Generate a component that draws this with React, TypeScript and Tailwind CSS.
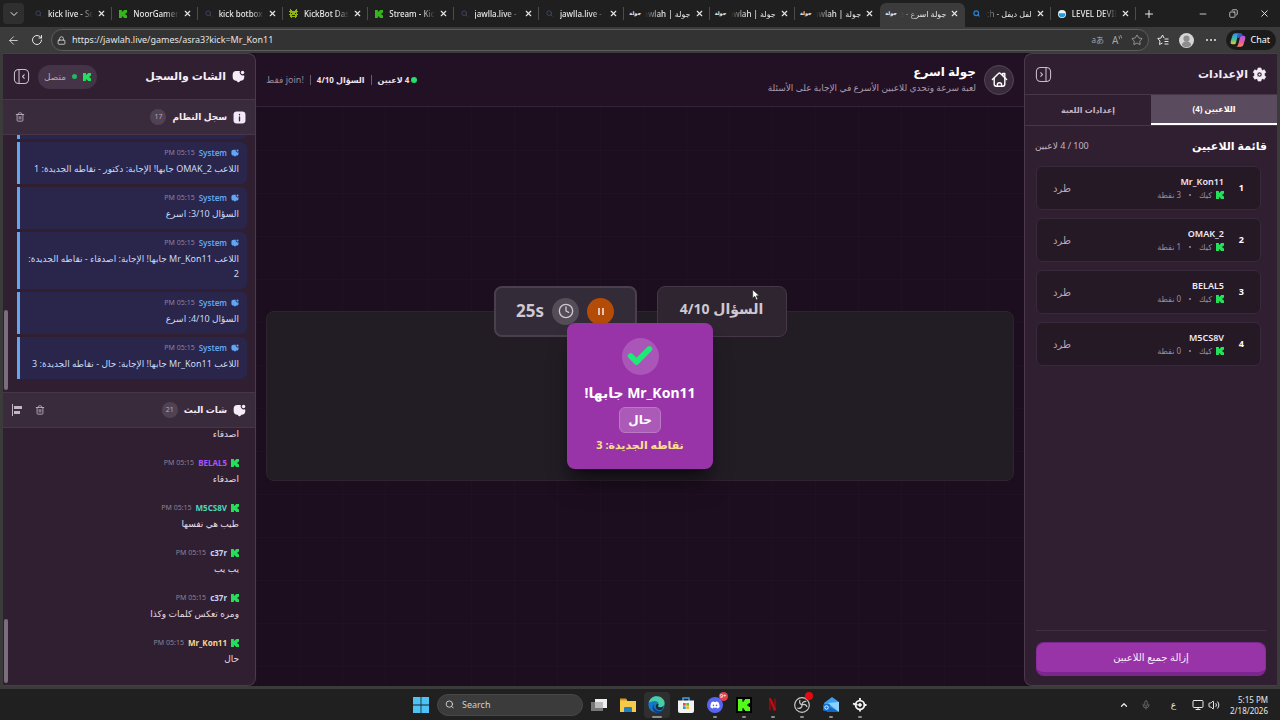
import type { ReactNode } from "react";
import { ArrowLeft, Check, ChevronDown, ChevronUp, Clock, Copy, Lock, Mic, Minus, Monitor, Plus, RotateCw, Search, Star, Trash2, Volume2, X } from "lucide-react";
import { FaDiscord } from "react-icons/fa";

interface Tab {
    icon: "search" | "kick" | "bot" | "jawlah" | "bing" | "level";
    title: string;
    rtl?: boolean;
    active?: boolean;
}

interface LogItem {
    text: string;
}

interface ChatItem {
    user: string;
    color: string;
    text: string;
}

interface Player {
    name: string;
    points: number;
}

const TIME = "05:15 PM";

const tabs: Tab[] = [
    { icon: "search", title: "kick live - Sea" },
    { icon: "kick", title: "NoorGamer S" },
    { icon: "search", title: "kick botbox -" },
    { icon: "bot", title: "KickBot Dash" },
    { icon: "kick", title: "Stream - Kick" },
    { icon: "search", title: "jawlla.live - Se" },
    { icon: "search", title: "jawlla.live - Se" },
    { icon: "jawlah", title: "جولة | Jawlah", rtl: true },
    { icon: "jawlah", title: "جولة | Jawlah", rtl: true },
    { icon: "jawlah", title: "جولة | Jawlah", rtl: true },
    { icon: "jawlah", title: "جولة اسرع - e", rtl: true, active: true },
    { icon: "bing", title: "لفل ديفل - ch", rtl: true },
    { icon: "level", title: "LEVEL DEVIL" },
];

const logs: LogItem[] = [
    { text: "السؤال 2/10: اسرع" },
    { text: "اللاعب OMAK_2 جابها! الإجابة: دكتور - نقاطه الجديدة: 1" },
    { text: "السؤال 3/10: اسرع" },
    { text: "اللاعب Mr_Kon11 جابها! الإجابة: اصدقاء - نقاطه الجديدة: 2" },
    { text: "السؤال 4/10: اسرع" },
    { text: "اللاعب Mr_Kon11 جابها! الإجابة: حال - نقاطه الجديدة: 3" },
];

const chat: ChatItem[] = [
    { user: "OMAK_2", color: "text-[#e9d5ff]", text: "اصدقاء" },
    { user: "BELAL5", color: "text-[#a855f7]", text: "اصدقاء" },
    { user: "M5CS8V", color: "text-[#4fd6bd]", text: "طيب هي نفسها" },
    { user: "c37r", color: "text-[#c9d6f5]", text: "يب يب" },
    { user: "c37r", color: "text-[#c9d6f5]", text: "ومره تعكس كلمات وكذا" },
    { user: "Mr_Kon11", color: "text-[#fbd78e]", text: "حال" },
];

const players: Player[] = [
    { name: "Mr_Kon11", points: 3 },
    { name: "OMAK_2", points: 1 },
    { name: "BELAL5", points: 0 },
    { name: "M5CS8V", points: 0 },
];

const KickIcon = ({ className }: { className: string }) => (
    <svg viewBox="0 0 9 9" fill="currentColor" className={className}>
        <path d="M0 0h3.3v2h1V1h1V0H9v3H8v1H7v1h1v1h1v3H5.3V8h-1V7h-1v2H0z" />
    </svg>
);

const ChatIcon = ({ className }: { className: string }) => (
    <svg viewBox="0 0 24 24" fill="currentColor" className={className}>
        <path d="M14.500 2a5.800 5.800 0 0 0 7.800 7.500c.3 1 .4 2 .4 3 0 4.300-1.700 6.700-5.700 7.300h-1.500L13.500 22c-.8.900-2.200.900-3 0L8.300 19.800H7C3 19.200 1.200 16.800 1.200 12.500V9c0-4.500 2.300-7 6.800-7z" />
        <circle cx="19.500" cy="4.800" r="3.200" />
    </svg>
);

const GearIcon = () => (
    <svg viewBox="0 0 24 24" fill="currentColor" fillRule="evenodd" className="size-[15px]">
        <path d="M9.700 1.500h4.600l.8 3 1.600.9 3-.9 2.300 4-2.200 2.200v2.600l2.200 2.200-2.300 4-3-.9-1.600.9-.8 3H9.700l-.8-3-1.600-.9-3 .9-2.300-4 2.200-2.200v-2.600L2 8.500l2.300-4 3 .9 1.600-.9zM12 8a4 4 0 1 0 0 8 4 4 0 0 0 0-8z" stroke="currentColor" strokeLinejoin="round" />
        <circle cx="12" cy="12" r="1.800" />
    </svg>
);

const HomeIcon = () => (
    <svg viewBox="0 0 24 24" fill="none" stroke="currentColor" strokeWidth="2" strokeLinecap="round" strokeLinejoin="round" className="size-[17px]">
        <path d="M2 12 10.600 3.600a2 2 0 0 1 2.800 0L22 12" />
        <path d="M4.500 10v8.500A3 3 0 0 0 7.500 21.500h9a3 3 0 0 0 3-3V10" />
        <path d="M9 21.500V19.500a3 3 0 0 1 6 0v2M16.500 6.500V3.500h3V9" />
    </svg>
);

const SidebarIcon = ({ flip }: { flip?: boolean }) => (
    <svg viewBox="0 0 24 24" fill="none" stroke="currentColor" strokeWidth="1.500" strokeLinecap="round" strokeLinejoin="round" className="size-[17px]">
        <rect x="2" y="2" width="20" height="20" rx="6" />
        {flip
            ? <path d="M15.500 2v20M8 9.500l2.500 2.500L8 14.500" />
            : <path d="M8.500 2v20M16 9.500 13.500 12l2.500 2.500" />}
    </svg>
);

const InfoIcon = () => (
    <svg viewBox="0 0 24 24" className="size-[13px]">
        <rect x="1" y="1" width="22" height="22" rx="6" fill="#f3e8f7" />
        <path d="M12 11v7M12 6.500v.5" stroke="#3a2a3c" strokeWidth="2.500" strokeLinecap="round" />
    </svg>
);

const CopilotIcon = () => (
    <svg viewBox="0 0 24 24" className="size-4">
        <defs>
            <linearGradient id="cpA" x1="0" y1="0" x2="0" y2="1">
                <stop offset="0" stopColor="#2f8df0" />
                <stop offset="0.600" stopColor="#4cc38a" />
                <stop offset="1" stopColor="#f4c430" />
            </linearGradient>
            <linearGradient id="cpB" x1="0" y1="0" x2="0" y2="1">
                <stop offset="0" stopColor="#a05cf0" />
                <stop offset="0.600" stopColor="#ee5a9a" />
                <stop offset="1" stopColor="#f98a5b" />
            </linearGradient>
        </defs>
        <path d="M8 2h7c-2 0-3 2-3.500 4L9 16c-.5 1.800-1.500 2.500-3 2.500H4c-3 0-3.500-2-2.800-5L3.500 6C4.300 3.300 5.500 2 8 2z" fill="url(#cpA)" />
        <path d="M12 2h4c2 0 2.500 1.500 3 3.500h-1.500c-2 0-3 1.500-3.500 3.500h-3z" fill="#2a5fd8" />
        <path d="M16 22H9c2 0 3-2 3.500-4L15 8c.5-1.800 1.500-2.500 3-2.500h2c3 0 3.500 2 2.800 5L20.500 18c-.8 2.700-2 4-4.500 4z" fill="url(#cpB)" />
    </svg>
);

const TabIcon = ({ icon }: { icon: Tab["icon"] }) => {
    if (icon === "kick") return <KickIcon className="size-2 text-[#35b51c]" />;
    if (icon === "search") return <Search className="size-[7px] text-[#3d4a68]" strokeWidth={3} />;
    if (icon === "bing") return <Search className="size-[7px] text-[#2584d8]" strokeWidth={4} />;
    if (icon === "jawlah") return <span className="text-[5px] leading-none font-bold text-[#eeeeee]">جولة</span>;
    if (icon === "bot") {
        return <svg viewBox="0 0 9 9" fill="#8fb312" className="size-[9px]">
            <path fillRule="evenodd" d="M1 0h1v1h1v1h3V1h1V0h1v2h1v1H8v2h1v1H8v2H7v1H6V8H3v1H2V8H1V6H0V5h1V3H0V2h1zM2 4v1h1V4zM6 4v1h1V4zM3 6v1h3V6z" />
        </svg>;
    }
    return <svg viewBox="0 0 10 10" className="size-2">
        <circle cx="5" cy="5" r="5" fill="#e8f6ff" />
        <path d="M1 4h8v2a4 3 0 0 1-8 0z" fill="#2498dc" />
    </svg>;
};

const BrowserBar = () => (
    <header className="shrink-0 text-[#e8e8e8]">
        <div className="flex h-[27px] items-end bg-[#1f1f1f]">
            <button aria-label="Tab list" className="mx-[3px] mb-[3px] flex size-[21px] items-center justify-center rounded bg-[#2f2f2f]">
                <ChevronDown className="size-3" />
            </button>
            <nav className="flex h-6 min-w-0 flex-1">
                {tabs.map((tab, i) => (
                    <a
                        key={i}
                        href="#"
                        className={`flex min-w-0 flex-1 items-center gap-1 pr-1.5 pl-[5px] pb-[3px] ${tab.active ? "rounded-t-md bg-[#3b3b3b]" : tabs[i + 1]?.active ? "" : "bg-[linear-gradient(#4c4c4c,#4c4c4c)] bg-[length:1px_13px] bg-[position:right_4px] bg-no-repeat"}`}
                    >
                        <span className="flex w-3 shrink-0 justify-center"><TabIcon icon={tab.icon} /></span>
                        <span
                            dir={tab.rtl ? "rtl" : "ltr"}
                            className={`min-w-0 flex-1 text-[8px] leading-4 font-medium whitespace-nowrap ${tab.rtl ? "[mask-image:linear-gradient(to_left,#000_65%,transparent)]" : "[mask-image:linear-gradient(to_right,#000_70%,transparent)]"}`}
                        >
                            {tab.title}
                        </span>
                        <X className="size-[9px] shrink-0" strokeWidth={3} />
                    </a>
                ))}
            </nav>
            <div className="flex h-[27px] w-36 items-center pl-[7px]">
                <button aria-label="New tab" className="mr-auto"><Plus className="size-3" /></button>
                <div className="flex items-center gap-[21px] pr-2.5">
                    <button aria-label="Minimize"><Minus className="size-[10px]" /></button>
                    <button aria-label="Restore"><Copy className="size-[9px] -scale-x-100" /></button>
                    <button aria-label="Close"><X className="size-[11px]" /></button>
                </div>
            </div>
        </div>
        <div className="flex h-[26px] items-center bg-[#3b3b3b] pr-1 pl-[7px]">
            <button aria-label="Back"><ArrowLeft className="size-[13px]" strokeWidth={1.5} /></button>
            <button aria-label="Reload" className="mr-2 ml-[11px]"><RotateCw className="size-3" strokeWidth={2} /></button>
            <div className="flex h-[22px] min-w-0 flex-1 items-center gap-2 rounded-full border border-[#5c5c5c] bg-[#333333] px-[5px]">
                <Lock className="size-[9px]" />
                <input aria-label="Address" defaultValue="https://jawlah.live/games/asra3?kick=Mr_Kon11" className="-ml-0.5 min-w-0 flex-1 bg-transparent text-[9px] text-[#e4e4e4] outline-none" />
                <span className="text-[8px] text-[#a5a5a5]">aあ</span>
                <span className="flex items-start text-[10px] leading-none text-[#a5a5a5]">A
                    <svg viewBox="0 0 6 6" fill="none" stroke="currentColor" className="size-[5px]"><path d="m1 1 1 4M3 0l1.500 4" /></svg>
                </span>
                <Star className="size-3 text-[#b5b5b5]" strokeWidth={1.5} />
            </div>
            <button aria-label="Favorites" className="ml-2 flex items-center">
                <svg viewBox="0 0 24 24" fill="none" stroke="currentColor" strokeWidth="2" strokeLinejoin="round" className="size-3">
                    <path d="m14 8-3-6-3 6-6.500 1L6 14l-1 7 6-3M15 10h8M15 15h8M15 20h8" />
                </svg>
            </button>
            <button aria-label="Profile" className="ml-2.5">
                <svg viewBox="0 0 16 16" className="size-[15px]">
                    <circle cx="8" cy="8" r="8" fill="#d5d5d5" />
                    <circle cx="8" cy="6" r="3.300" fill="#8d8d8d" />
                    <path d="M3 13a5 4 0 0 1 10 0 7 7 0 0 1-10 0z" fill="#8d8d8d" />
                </svg>
            </button>
            <button aria-label="More" className="ml-3">
                <svg viewBox="0 0 10 4" fill="currentColor" className="h-1 w-2.5"><circle cx="1" cy="2" r="1" /><circle cx="5" cy="2" r="1" /><circle cx="9" cy="2" r="1" /></svg>
            </button>
            <button className="ml-2.5 flex h-5 items-center gap-1 rounded-full bg-[#1b1b1b] pr-1.5 pl-1 text-[9px] text-white">
                <CopilotIcon /> Chat
            </button>
        </div>
    </header>
);

const Count = ({ children }: { children: ReactNode }) => (
    <span className="flex h-4 min-w-4 items-center justify-center rounded-full bg-[#504153] px-1 text-[7px] font-normal text-[#b7a9ba]">{children}</span>
);

const SettingsPanel = () => (
    <aside className="flex w-[253px] shrink-0 flex-col rounded-r-none rounded-l-lg border-r-0 border border-[#4a3a4c] bg-[#2f1f31]">
        <div className="flex h-10 items-center justify-between px-[10px] text-[#f5ecf7]">
            <h2 className="flex items-center gap-1 text-[11px] font-bold"><GearIcon />الإعدادات</h2>
            <button aria-label="طي الإعدادات" className="text-[#c9bccb]"><SidebarIcon flip /></button>
        </div>
        <div className="flex h-8 border-y border-t-[#463648] border-b-[#463648] text-[8px] font-bold">
            <button className="flex-1 border-b-2 border-white bg-[#5b4b5e] text-white">اللاعبين (4)</button>
            <button className="flex-1 text-[#c3b4c6]">إعدادات اللعبة</button>
        </div>
        <div className="flex h-10 items-center justify-between px-[10px]">
            <h3 className="text-[11px] font-bold text-white">قائمة اللاعبين</h3>
            <span className="text-[9px] text-[#c3b4c6]">100 / 4 لاعبين</span>
        </div>
        <ul className="flex min-h-0 flex-1 flex-col gap-2 pr-4 pl-[11px]">
            {players.map((player, i) => (
                <li key={player.name} className="flex h-11 items-center rounded-md border border-[#382a3b] bg-[#251926] px-4">
                    <span className="w-[20px] text-[9px] font-bold text-white">{i + 1}</span>
                    <div className="flex-1">
                        <p className="text-[9px] leading-[13px] font-semibold text-[#f2e9f4]">{player.name}</p>
                        <p className="flex items-center gap-1 text-[8px] leading-[13px] text-[#9c8e9f]">
                            <KickIcon className="size-2 text-[#22e05a]" />كيك<span className="mx-1 size-0.5 rounded-full bg-[#9c8e9f]" />{player.points} نقطة
                        </p>
                    </div>
                    <button className="text-[10px] text-[#b5a6b8]">طرد</button>
                </li>
            ))}
        </ul>
        <div className="mx-[11px] border-t border-[#3f3042] pt-[11px] pb-[9px]">
            <button className="h-[34px] w-full rounded-lg border border-b-4 border-[#7d2690] border-x-[#8a2c9b] bg-[#9833a8] text-[10px] text-[#fbeefd]">إزالة جميع اللاعبين</button>
        </div>
    </aside>
);

const SystemLog = () => (
    <section>
        <div className="flex h-9 items-center justify-between border-y border-[#463648] bg-[#3a2b3c] pr-[9px] pl-3">
            <h3 className="flex items-center gap-1.5 text-[9px] font-bold text-[#f5ecf7]"><InfoIcon />سجل النظام<Count>17</Count></h3>
            <button aria-label="مسح السجل"><Trash2 className="size-[10px] text-[#c3b4c6]" /></button>
        </div>
        <div className="relative flex h-[257px] flex-col justify-end gap-[3px] overflow-hidden pr-2 pb-[13px] pl-[14px]">
            {logs.map((log, i) => (
                <div key={i} className="shrink-0 rounded-r-md border-l-[3px] border-[#62a5f3] bg-[#29254b] pt-[3px] pr-2 pb-2 pl-2">
                    <p className="flex items-center gap-1 text-[8px] leading-4">
                        <ChatIcon className="size-2 text-[#62a5f3]" />
                        <span className="font-semibold text-[#62a5f3]">System</span>
                        <span className="text-[7px] text-[#8b83a3]">{TIME}</span>
                    </p>
                    <p className="text-[9px] leading-[15px] text-[#c7dbf8]">{log.text}</p>
                </div>
            ))}
            <span className="absolute bottom-0.5 left-px h-20 w-1 rounded-full bg-[#7b6c7e]" />
        </div>
    </section>
);

const StreamChat = () => (
    <section className="flex min-h-0 flex-1 flex-col">
        <div className="flex h-9 shrink-0 items-center justify-between border-y border-[#463648] bg-[#3a2b3c] pr-[9px] pl-2">
            <h3 className="flex items-center gap-1.5 text-[9px] font-bold text-[#f5ecf7]"><ChatIcon className="size-[13px]" />شات البث<Count>21</Count></h3>
            <div className="flex items-center gap-3 text-[#c3b4c6]">
                <button aria-label="مسح الشات"><Trash2 className="size-[10px]" /></button>
                <button aria-label="محاذاة">
                    <svg viewBox="0 0 12 12" fill="currentColor" className="size-3">
                        <path d="M1 0h1v12H1zM3 2h8v3H3zM3 7h6v3H3z" />
                    </svg>
                </button>
            </div>
        </div>
        <div className="relative flex min-h-0 flex-1 flex-col justify-end gap-[3px] overflow-hidden pr-4 pb-[11px]">
            {chat.map((item, i) => (
                <div key={i} className="shrink-0 pt-[3px] pb-2">
                    <p className="flex items-center gap-1 text-[8px] leading-4">
                        <KickIcon className="size-2 text-[#22e05a]" />
                        <span className={`font-bold ${item.color}`}>{item.user}</span>
                        <span className="text-[7px] text-[#8f8192]">{TIME}</span>
                    </p>
                    <p className="text-[9px] leading-[15px] text-[#e6dce8]">{item.text}</p>
                </div>
            ))}
            <span className="absolute bottom-0.5 left-px h-16 w-1 rounded-full bg-[#7b6c7e]" />
        </div>
    </section>
);

const ChatPanel = () => (
    <aside className="flex w-[253px] shrink-0 flex-col overflow-hidden rounded-r-lg border border-l-0 border-[#4a3a4c] bg-[#2f1f31]">
        <div className="flex h-[45px] shrink-0 items-center justify-between px-[10px]">
            <h2 className="flex items-center gap-1.5 text-[11px] font-bold text-[#f5ecf7]"><ChatIcon className="size-[13px]" />الشات والسجل</h2>
            <div className="flex items-center gap-2">
                <span className="flex h-6 items-center gap-1.5 rounded-full bg-[#453448] px-1.5 text-[9px] text-[#b5a6b8]">
                    <KickIcon className="size-2 text-[#22e05a]" />
                    <span className="size-[5px] rounded-full bg-[#27b564]" />متصل
                </span>
                <button aria-label="طي الشات" className="text-[#c9bccb]"><SidebarIcon /></button>
            </div>
        </div>
        <SystemLog />
        <StreamChat />
    </aside>
);

const Cursor = () => (
    <svg viewBox="0 0 12 18" className="absolute top-0.5 left-[94px] h-3 w-2">
        <path d="M1 1v13l3.200-3 2.300 5.500 2.300-1-2.300-5.200H11z" fill="white" stroke="#222" />
    </svg>
);

const Game = () => (
    <main className="flex min-w-0 flex-1 flex-col bg-[#1d0e1f]">
        <div className="flex h-[54px] items-center justify-between border-b border-[#33233a] bg-[#221124] px-[10px]">
            <div className="flex items-center gap-2">
                <a href="#" aria-label="الرئيسية" className="flex size-[30px] items-center justify-center rounded-full border border-[#554658] bg-[#392a3c] text-white"><HomeIcon /></a>
                <div>
                    <h1 className="text-[12px] leading-4 font-bold text-white">جولة اسرع</h1>
                    <p className="text-[9px] leading-4 text-[#a999ad]">لعبة سرعة وتحدي للاعبين الأسرع في الإجابة على الأسئلة</p>
                </div>
            </div>
            <div className="flex items-center gap-1.5 text-[8px] font-bold text-[#ede3ef]">
                <span className="flex items-center gap-0.5"><span className="size-1.5 rounded-full bg-[#22e06a]" />4 لاعبين</span>
                <span className="h-2.5 w-px bg-[#6a5a6d]" />
                <span>السؤال 4/10</span>
                <span className="h-2.5 w-px bg-[#6a5a6d]" />
                <span dir="ltr" className="text-[9px] font-normal text-[#96879a]">فقط join!</span>
            </div>
        </div>
        <div className="flex flex-1 flex-col justify-center bg-[linear-gradient(#ffffff03_1px,transparent_1px),linear-gradient(90deg,#ffffff03_1px,transparent_1px)] bg-[length:43px_43px] px-[10px] pb-0.5">
            <div className="relative h-[170px] rounded-lg border border-[#30222f] bg-[#221c25]">
                <div className="absolute inset-x-0 -top-[26px] flex justify-center gap-5">
                    <div className="relative flex h-[51px] w-[130px] justify-center rounded-lg border border-[#443747] bg-[#2e2530] pt-2.5 text-[14px] leading-6 font-bold text-[#cfc8d1]">
                        السؤال 4/10
                        <Cursor />
                    </div>
                    <div className="flex h-[51px] w-[143px] items-center justify-center gap-2 rounded-lg border-2 border-[#4a404d] bg-[#332b37] text-[#cfc8d1]">
                        <button aria-label="إيقاف مؤقت" className="flex size-[27px] items-center justify-center gap-0.5 rounded-full bg-[#b44c08]">
                            <span className="h-[7px] w-0.5 bg-[#e5c3b0]" />
                            <span className="h-[7px] w-0.5 bg-[#e5c3b0]" />
                        </button>
                        <span className="flex size-[27px] items-center justify-center rounded-full bg-[#544d58]"><Clock className="size-4" strokeWidth={2} /></span>
                        <span className="text-[17px] font-bold">25s</span>
                    </div>
                </div>
                <div className="absolute inset-0 flex items-center justify-center">
                    <div role="dialog" className="flex h-[146px] w-[146px] flex-col items-center rounded-lg bg-[#9833a8] pt-[15px] text-white shadow-xl shadow-black/40">
                        <span className="flex size-[37px] shrink-0 items-center justify-center rounded-full bg-[#aa55b8]"><Check className="size-7 text-[#1fe877]" strokeWidth={5} /></span>
                        <p className="mt-2 text-[14px] leading-5 font-bold whitespace-nowrap">Mr_Kon11 جابها!</p>
                        <p className="mt-1 flex h-[26px] items-center rounded-md border border-[#bb78c6] bg-[#ab5ab8] px-2 text-[12px] font-bold">حال</p>
                        <p className="mt-1 text-[11px] leading-4 font-bold text-[#fbe08c]">نقاطه الجديدة: 3</p>
                    </div>
                </div>
            </div>
        </div>
    </main>
);

const TaskApp = ({ label, dot, children }: { label: string; dot?: boolean; children: ReactNode }) => (
    <button aria-label={label} className={`relative flex size-[26px] items-center justify-center rounded ${label === "Edge" ? "bg-[#2f2f2f]" : ""}`}>
        {children}
        {dot && <span className={`absolute bottom-0 h-0.5 rounded-full bg-[#8d8d8d] ${label === "Edge" ? "w-2.5" : "w-1"}`} />}
    </button>
);

const Taskbar = () => (
    <footer className="grid h-[31px] shrink-0 grid-cols-[1fr_auto_1fr] items-center bg-[#202020] text-[#e8e8e8]">
        <div />
        <div className="flex items-center gap-[3px]">
            <TaskApp label="Start">
                <svg viewBox="0 0 16 16" fill="#4cc2f5" className="size-4"><path d="M0 0h7.600v7.600H0zM8.400 0H16v7.600H8.400zM0 8.400h7.600V16H0zM8.400 8.400H16V16H8.400z" /></svg>
            </TaskApp>
            <label className="flex h-[22px] w-[146px] items-center gap-2 rounded-full border border-[#484848] bg-[#3b3b3b] px-[7px]">
                <Search className="size-[11px]" />
                <input type="text" aria-label="Search" placeholder="Search" className="w-full min-w-0 bg-transparent text-[9px] outline-none placeholder:text-[#d0d0d0]" />
            </label>
            <TaskApp label="Task view">
                <svg viewBox="0 0 16 16" className="size-4"><path d="M0 5h12v9H0z" fill="#777" /><path d="M4 2h12v9H4z" fill="#eee" /><path d="M4 5h8v6H4z" fill="#bbb" /></svg>
            </TaskApp>
            <TaskApp label="Files">
                <svg viewBox="0 0 16 16" className="size-4"><path d="M0 2h6l1.500 2H16v11H0z" fill="#f7c948" /><path d="M0 1.500h6l1 2H0z" fill="#d69a1c" /><path d="M4 15v-4a1 1 0 0 1 1-1h6a1 1 0 0 1 1 1v4z" fill="#1f7fc0" /></svg>
            </TaskApp>
            <TaskApp label="Edge" dot>
                <svg viewBox="0 0 24 24" className="size-[17px]">
                    <circle cx="12" cy="12" r="11.500" fill="#1479c9" />
                    <path d="M1 10C2 4 7 .5 12 .5c7 0 11.500 5 11.500 9.500 0 4-3 6-6 6-2 0-3.500-.8-3.500-1.800 0-.7 1-1.200 1-3C15 8.500 12.500 7 9.500 7 6 7 2.500 8.500 1 10z" fill="#46cfa5" />
                    <path d="M9 11c-2.500 4 1 10.500 8 10.300 2 0 4-1 4.800-2-2 4-7 5-10 4.200C6 22 4.500 15 9 11z" fill="#123f88" />
                    <path d="M14 14.200c0 1 1.500 1.800 3.500 1.800 2 0 4-.8 5.300-2.800L20 19c-5 2.500-9.500-1-9-5 .2-1.500 1.500-3 3-3 1.500.5 1 2 0 3.200z" fill="#252a2e" />
                </svg>
            </TaskApp>
            <TaskApp label="Store">
                <svg viewBox="0 0 16 16" className="size-4"><path d="M5 4V1h6v3" fill="none" stroke="#38a3e8" strokeWidth="1.500" /><path d="M0 3.500h16V14a2 2 0 0 1-2 2H2a2 2 0 0 1-2-2z" fill="#f3f3f3" /><path d="M5 6h2.700v2.700H5z" fill="#e8502a" /><path d="M8.300 6H11v2.700H8.300z" fill="#6fb320" /><path d="M5 9.300h2.700V12H5z" fill="#1e9de0" /><path d="M8.300 9.300H11V12H8.300z" fill="#f5b51b" /></svg>
            </TaskApp>
            <TaskApp label="Discord" dot>
                <span className="flex size-4 items-center justify-center rounded-full bg-[#5865f2]"><FaDiscord className="size-[10px] text-white" /></span>
                <span className="absolute top-0 right-0 flex h-[9px] items-center rounded-full bg-[#e0414b] px-px text-[6px] leading-none text-white">9+</span>
            </TaskApp>
            <TaskApp label="Kick" dot>
                <span className="flex size-4 items-center justify-center bg-black"><KickIcon className="size-3 text-[#53fc18]" /></span>
            </TaskApp>
            <TaskApp label="Netflix" dot>
                <svg viewBox="0 0 10 14" className="h-[13px] w-[9px]"><path d="M1 0h2.500v14L1 13zM6.500 1 9 0v13l-2.500 1z" fill="#7d0d13" /><path d="M1 0h2.500L9 13l-2.500 1z" fill="#b5121a" /></svg>
            </TaskApp>
            <TaskApp label="OBS" dot>
                <svg viewBox="0 0 24 24" fill="none" stroke="#c9c9c9" className="size-4"><circle cx="12" cy="12" r="11" strokeWidth="1.800" /><path d="M9 4.500a6 6 0 0 0 3 7.500c3.500-1.800 6.500-.5 7.500 3M12 12c.3 4-3 6-7 4.500M18.500 6.500C15 6 12 8 12 12" strokeWidth="1.800" /></svg>
                <span className="absolute top-0 right-0.5 size-2 rounded-full bg-[#e30b13]" />
            </TaskApp>
            <TaskApp label="Mail" dot>
                <svg viewBox="0 0 16 16" className="size-4"><path d="M1 6 9 0l7 5v10H4z" fill="#3aa0f0" /><path d="M5 6 16 5v10z" fill="#8cd2fa" /><path d="M4 8l12 7H4z" fill="#1766c4" /><rect y="7" width="7" height="7" rx="1.500" fill="#1370cf" /><circle cx="3.500" cy="10.500" r="1.700" fill="none" stroke="white" /></svg>
            </TaskApp>
            <TaskApp label="SteelSeries" dot>
                <svg viewBox="0 0 16 16" fill="none" stroke="#f2f2f2" className="size-[15px]"><circle cx="8.500" cy="8.500" r="4.700" strokeWidth="2" /><circle cx="8.500" cy="8.500" r="1.500" fill="#f2f2f2" /><path d="M8.500 4V1M8.500 13v2.500M13 8.500h2.500M1 7l5 1.500" strokeWidth="2" /></svg>
            </TaskApp>
        </div>
        <div className="flex items-center justify-end pr-3">
            <button aria-label="Hidden icons"><ChevronUp className="size-[10px]" strokeWidth={3} /></button>
            <Mic className="ml-3 size-[10px] text-[#707070]" />
            <span className="ml-5 text-[9px]">ع</span>
            <Monitor className="ml-4 size-3" />
            <Volume2 className="ml-1 size-3" />
            <p className="ml-2.5 text-right text-[8px] leading-[11px]">5:15 PM<br />2/18/2026</p>
        </div>
    </footer>
);

const App = () => {
    return <div className="flex h-screen flex-col overflow-hidden bg-[#3b3b3b] font-['Noto_Sans','DejaVu_Sans','Noto_Sans_CJK_JP',sans-serif]">
        <BrowserBar />
        <div dir="rtl" className="mx-[3px] mb-[3px] flex min-h-0 flex-1 bg-[#1d0e1f]">
            <SettingsPanel />
            <Game />
            <ChatPanel />
        </div>
        <Taskbar />
    </div>
}

export default App;
